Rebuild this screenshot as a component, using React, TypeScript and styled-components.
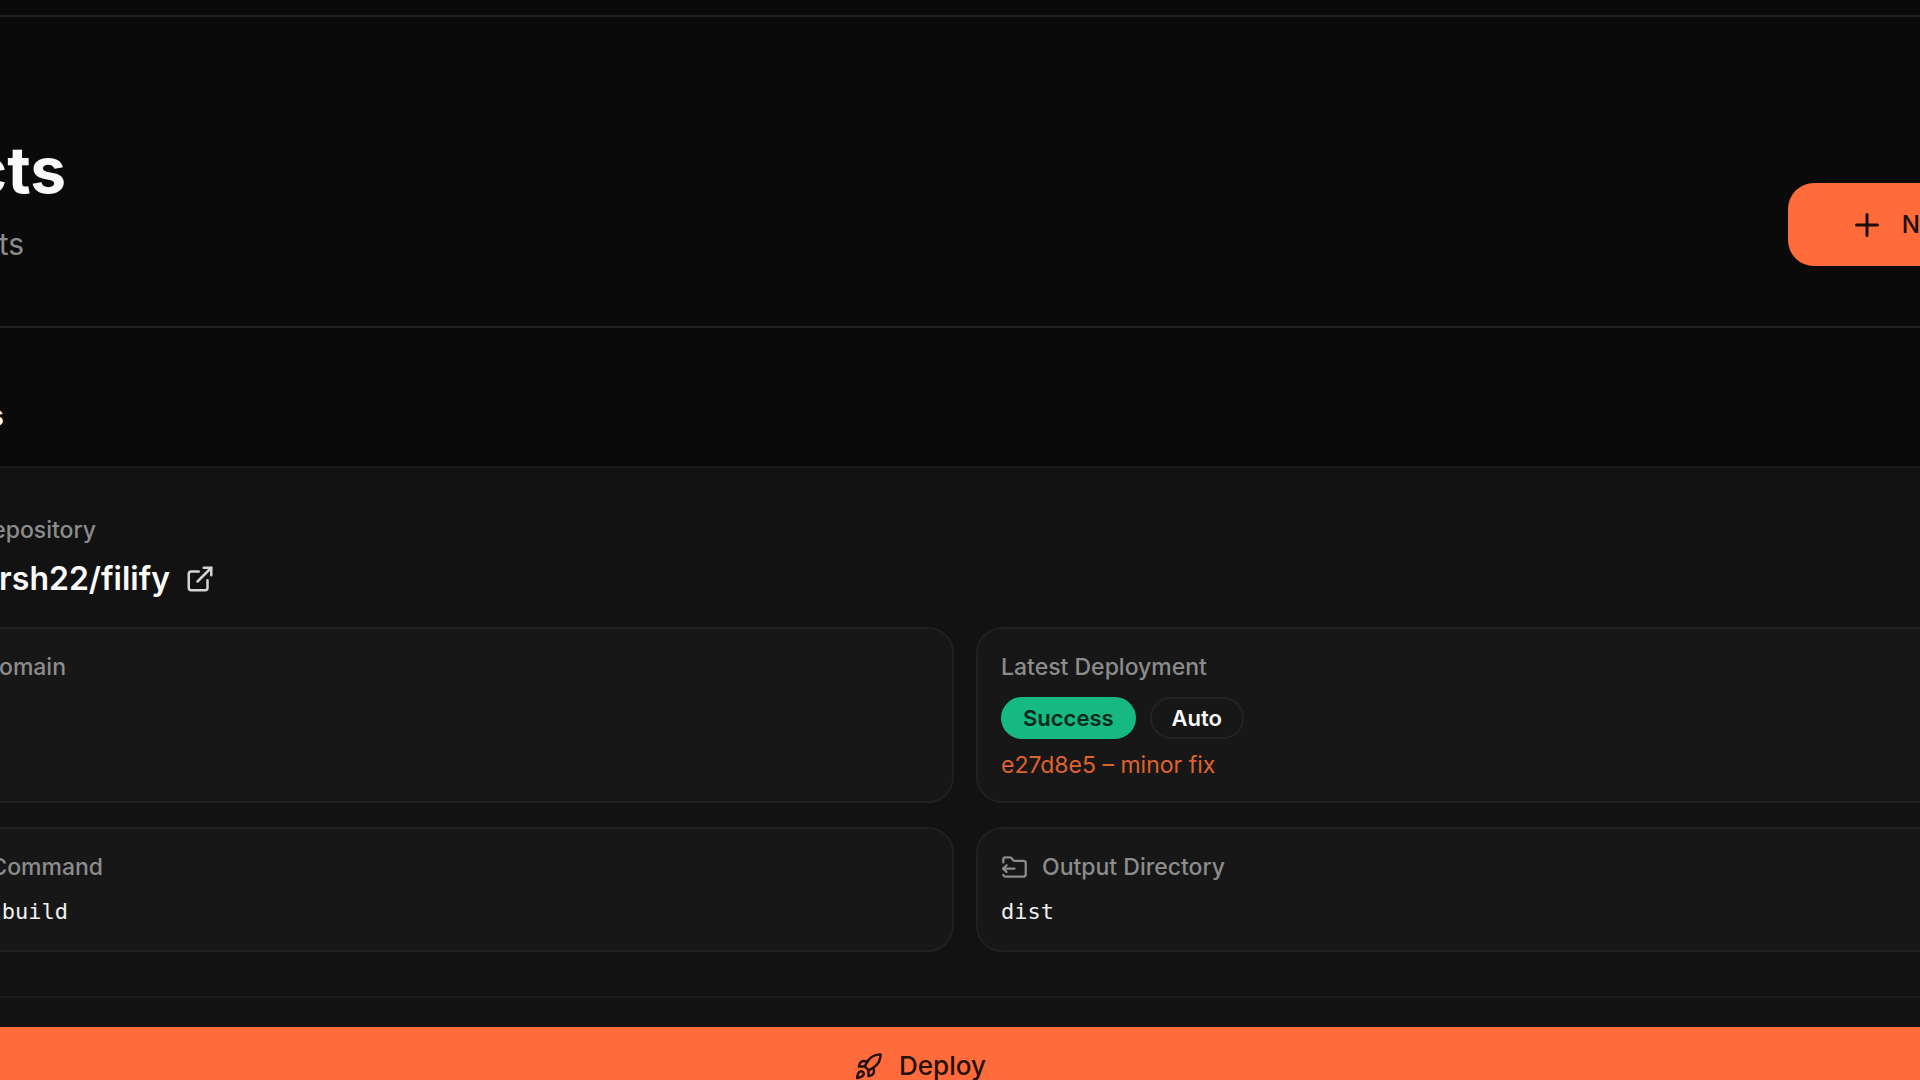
import React from "react";
import styled, { createGlobalStyle } from "styled-components";
import { ExternalLink, FolderOutput, Plus, Rocket } from "lucide-react";

const GlobalStyle = createGlobalStyle`
  *, *::before, *::after { box-sizing: border-box; }
  body {
    margin: 0;
    background: #0a0a0a;
    color: #fafafa;
    font-family: Inter, "Liberation Sans", sans-serif;
  }
  h1, h2, h3, p, dl, dt, dd { margin: 0; }
`;

const Page = styled.div`
  height: 100vh;
  overflow: hidden;
`;

const TopBar = styled.header`
  height: 17px;
  border-bottom: 2px solid #202020;
`;

const Hero = styled.section`
  display: flex;
  justify-content: space-between;
  align-items: flex-end;
  padding: 117px 0 60px;
  border-bottom: 2px solid #202020;
`;

/* Lines that run in from beyond the left edge keep their ends aligned to a set width. */
const Tail = styled.span<{ $width: number }>`
  display: flex;
  justify-content: flex-end;
  width: ${(p) => p.$width}px;
  overflow: hidden;
  white-space: nowrap;
`;

const Title = styled.h1`
  font-size: 64px;
  line-height: 72px;
  font-weight: 700;
`;

const Subtitle = styled.p`
  margin-top: 16px;
  font-size: 30px;
  line-height: 44px;
  color: #8c8c8c;
`;

const NewButton = styled.button`
  display: flex;
  align-items: center;
  gap: 17px;
  height: 83px;
  padding: 0 0 0 61px;
  border: 0;
  border-radius: 26px 0 0 26px;
  background: #ff6b3a;
  color: #1c0f0a;
  font: 500 24px/32px Inter, "Liberation Sans", sans-serif;
`;

const SectionTitle = styled.h2`
  padding: 68px 0 30px;
  font-size: 28px;
  line-height: 40px;
  font-weight: 600;
`;

const Card = styled.article`
  border-top: 2px solid #1a1a1a;
  background: #121212;
  padding-top: 46px;
`;

const Label = styled.dt`
  display: flex;
  align-items: center;
  gap: 14px;
  font-size: 23px;
  line-height: 32px;
  font-weight: 500;
  color: #8c8c8c;
`;

const RepoLabel = styled(Label).attrs({ as: "p" })``;

const RepoRow = styled.div`
  display: flex;
  align-items: center;
  gap: 15px;
  margin-top: 11px;
`;

const RepoName = styled.h3`
  font-size: 32px;
  line-height: 44px;
  font-weight: 600;
`;

const IconLink = styled.a`
  display: flex;
  color: #d4d4d4;
`;

const Details = styled.dl`
  display: grid;
  grid-template-columns: 1fr 1fr;
  gap: 24px 22px;
  margin: 26px -70px 0 -60px;
`;

const Tile = styled.div`
  display: flex;
  flex-direction: column;
  gap: 12px;
  padding: 22px 23px;
  border: 2px solid #202020;
  border-radius: 26px;
  background: #171717;
`;

/* Pulls a tile's content back to the window edge where the tile bleeds off the left. */
const BleedTile = styled(Tile)`
  padding-left: 58px;
`;

const Pills = styled.dd`
  display: flex;
  gap: 14px;
  padding-top: 2px;
`;

const Pill = styled.span<{ $solid?: boolean }>`
  height: 42px;
  padding: 0 20px;
  border: 2px solid ${(p) => (p.$solid ? "#15b981" : "#232323")};
  border-radius: 21px;
  background: ${(p) => (p.$solid ? "#15b981" : "transparent")};
  color: ${(p) => (p.$solid ? "#06291d" : "#fafafa")};
  font-size: 22px;
  line-height: 38px;
  font-weight: 600;
`;

const Commit = styled.dd`
  font-size: 23px;
  line-height: 28px;
  color: #e0622f;
`;

const Code = styled.dd`
  font: 22px/33px "DejaVu Sans Mono", "Liberation Mono", monospace;
  color: #f0f0f0;
`;

const Footer = styled.footer`
  margin-top: 44px;
  padding-top: 29px;
  border-top: 2px solid #1a1a1a;
`;

const Actions = styled.div`
  display: grid;
  margin: 0 -60px 0 -140px;
`;

const DeployButton = styled.button`
  display: flex;
  align-items: center;
  justify-content: center;
  gap: 16px;
  height: 78px;
  border: 0;
  border-radius: 26px;
  background: #ff6b3a;
  color: #24110a;
  font: 500 26px/32px Inter, "Liberation Sans", sans-serif;
`;

export default function App() {
  return (
    <>
      <GlobalStyle />
      <Page>
        <TopBar />
        <main>
          <Hero>
            <div>
              <Title>
                <Tail $width={66}>cts</Tail>
              </Title>
              <Subtitle>
                <Tail $width={24}>ts</Tail>
              </Subtitle>
            </div>
            <NewButton type="button">
              <Plus size={36} strokeWidth={2} aria-hidden />N
            </NewButton>
          </Hero>
          <SectionTitle>
            <Tail $width={4}>s</Tail>
          </SectionTitle>
          <Card>
            <RepoLabel>
              <Tail $width={96}>epository</Tail>
            </RepoLabel>
            <RepoRow>
              <RepoName>
                <Tail $width={170}>rsh22/filify</Tail>
              </RepoName>
              <IconLink href="#repository" aria-label="filify">
                <ExternalLink size={30} strokeWidth={2} aria-hidden />
              </IconLink>
            </RepoRow>
            <Details>
              <BleedTile>
                <Label>
                  <Tail $width={66}>omain</Tail>
                </Label>
              </BleedTile>
              <Tile>
                <Label>Latest Deployment</Label>
                <Pills>
                  <Pill $solid>Success</Pill>
                  <Pill>Auto</Pill>
                </Pills>
                <Commit>e27d8e5 – minor fix</Commit>
              </Tile>
              <BleedTile>
                <Label>
                  <Tail $width={103}>Command</Tail>
                </Label>
                <Code>
                  <Tail $width={68}>build</Tail>
                </Code>
              </BleedTile>
              <Tile>
                <Label>
                  <FolderOutput size={27} strokeWidth={2} aria-hidden />
                  Output Directory
                </Label>
                <Code>dist</Code>
              </Tile>
            </Details>
            <Footer>
              <Actions>
                <DeployButton type="button">
                  <Rocket size={29} strokeWidth={2} aria-hidden />
                  Deploy
                </DeployButton>
              </Actions>
            </Footer>
          </Card>
        </main>
      </Page>
    </>
  );
}
